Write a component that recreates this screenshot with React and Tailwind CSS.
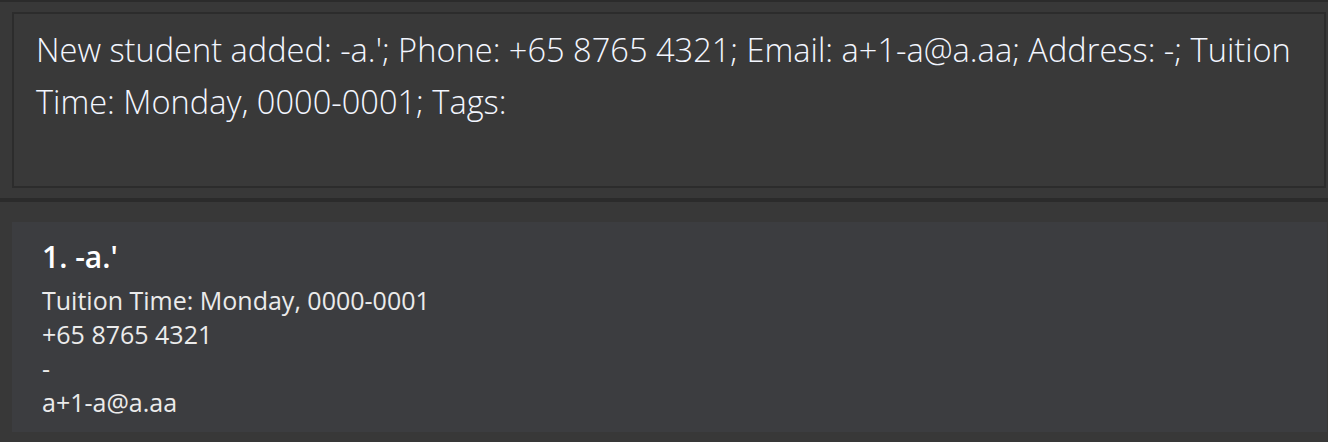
const ResultBox = ({ text }) => (
  <div className="ml-3 mr-[2px] mt-[10px] h-[176px] border-2 border-[#2c2c2c] bg-[#393939] pl-[22px] pr-3 pt-[10px]">
    <p
      className="text-[32.6px] leading-[52px] font-light text-[#f3f6ff]"
      style={{ fontFamily: '"Open Sans", "Noto Sans", sans-serif' }}
    >
      {text}
    </p>
  </div>
);

const StudentCard = ({ index, s }) => (
  <div
    className="ml-3 mr-[1px] h-[210px] bg-[#3c3d40] pl-[30px] pt-[15px] text-[#ebebeb]"
    style={{ fontFamily: '"Open Sans", "Noto Sans", sans-serif' }}
  >
    <div className="text-[30px] leading-[40px] font-semibold text-white">
      {index}. {s.name}
    </div>
    <div className="mt-[6px] text-[25px] leading-[34px]">
      <div>Tuition Time: {s.time}</div>
      <div>{s.phone}</div>
      <div>{s.address}</div>
      <div>{s.email}</div>
    </div>
  </div>
);

export default function App() {
  const student = {
    name: "-a.'",
    time: "Monday, 0000-0001",
    phone: "+65 8765 4321",
    address: "-",
    email: "a+1-a@a.aa",
  };

  return (
    <div className="w-[1328px] h-[442px] overflow-hidden bg-[#383838] border-t-2 border-[#2b2b2b]">
      <ResultBox text="New student added: -a.'; Phone: +65 8765 4321; Email: a+1-a@a.aa; Address: -; Tuition Time: Monday, 0000-0001; Tags:" />
      <div className="mt-[10px] h-1 bg-[#2b2b2b]" />
      <div className="pt-5">
        <StudentCard index={1} s={student} />
      </div>
    </div>
  );
}
